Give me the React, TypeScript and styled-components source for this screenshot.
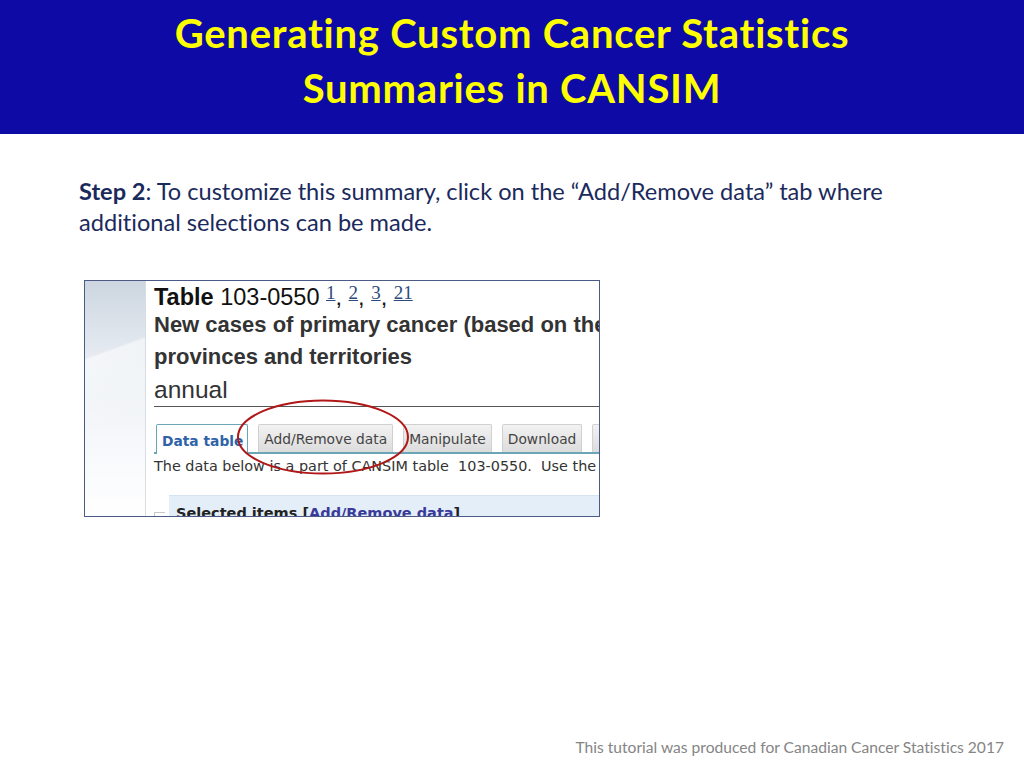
import styled, { createGlobalStyle } from 'styled-components';

const GlobalStyle = createGlobalStyle`
  body {
    margin: 0;
    background: #ffffff;
  }
`;

const Slide = styled.div`
  width: 1024px;
  height: 768px;
  display: flex;
  flex-direction: column;
  font-family: Lato, 'Open Sans', sans-serif;
  font-variant-ligatures: none;
  overflow: hidden;
`;

const Header = styled.header`
  height: 134px;
  background: #0e0aa5;
  display: flex;
  flex-direction: column;
  align-items: center;
  padding-top: 6px;
  box-sizing: border-box;
`;

const TitleLine = styled.h1`
  margin: 0;
  font-size: 40px;
  line-height: 55px;
  letter-spacing: 0.75px;
  font-weight: 700;
  color: #ffff00;
  text-align: center;
`;

const Body = styled.main`
  flex: 1;
  display: flex;
  flex-direction: column;
  padding: 42px 79px 0 79px;
`;

const StepText = styled.p`
  margin: 0;
  font-size: 23.6px;
  line-height: 31px;
  color: #1b2a5c;
  max-width: 830px;

  strong {
    font-weight: 700;
  }
`;

const ShotWrap = styled.div`
  position: relative;
  margin: 42px 0 0 5px;
  width: 516px;
  height: 237px;
`;

const Shot = styled.div`
  width: 100%;
  height: 100%;
  box-sizing: border-box;
  border: 1px solid #4b5b85;
  display: flex;
  overflow: hidden;
  background: #fff;
`;

const SideStrip = styled.div`
  width: 60px;
  flex-shrink: 0;
  border-right: 1px solid #d8dde3;
  background:
    linear-gradient(160deg, transparent 0%, transparent 30%, rgba(255, 255, 255, 0.55) 31%, transparent 60%),
    linear-gradient(180deg, #cdd6e0 0%, #dbe2ea 18%, #eaeff4 38%, #f5f7fa 65%, #ffffff 100%);
`;

const ShotContent = styled.div`
  flex: 1;
  padding-left: 8px;
  min-width: 0;
  overflow: hidden;
  white-space: nowrap;
`;

const TableTitle = styled.div`
  font-family: 'Liberation Sans', Arial, sans-serif;
  font-size: 23.5px;
  line-height: 24px;
  color: #111;

  b {
    font-weight: 700;
  }
`;

const Sup = styled.a`
  font-family: 'Liberation Serif', 'Times New Roman', serif;
  font-size: 19px;
  color: #2c4a7c;
  text-decoration: underline;
  vertical-align: 6px;
`;

const Subject = styled.div`
  font-family: 'Liberation Sans', Arial, sans-serif;
  font-size: 22px;
  font-weight: 700;
  line-height: 32px;
  color: #333;

  &:first-of-type {
    margin-top: 4px;
  }
`;

const Frequency = styled.div`
  font-family: 'Liberation Sans', Arial, sans-serif;
  font-size: 24.5px;
  line-height: 33px;
  color: #333;
  border-bottom: 1px solid #555;
`;

const TabRow = styled.div`
  display: flex;
  align-items: flex-start;
  gap: 10px;
  margin-top: 17px;
  padding-left: 2px;
  border-bottom: 2px solid #6aa6b8;
`;

const Tab = styled.div<{ $active?: boolean }>`
  font-family: 'DejaVu Sans', Verdana, sans-serif;
  font-size: 13.8px;
  display: flex;
  align-items: center;
  box-sizing: border-box;
  padding: ${(p) => (p.$active ? '3px 4px 0 5px' : '0 5px')};
  color: ${(p) => (p.$active ? '#2f63a8' : '#444')};
  font-weight: ${(p) => (p.$active ? 700 : 400)};
  background: ${(p) => (p.$active ? '#fff' : 'linear-gradient(#f2f2f2, #dcdcdc)')};
  border: 1px solid ${(p) => (p.$active ? '#6aa6b8' : '#d0d0d0')};
  border-bottom: none;
  height: ${(p) => (p.$active ? '30px' : '28px')};
  margin-bottom: ${(p) => (p.$active ? '-2px' : '0')};
  border-radius: 2px 2px 0 0;
`;

const Note = styled.div`
  font-family: 'DejaVu Sans', Verdana, sans-serif;
  font-size: 14.4px;
  line-height: 17px;
  color: #333;
  margin-top: 4px;
  white-space: pre;
`;

const SelectedRow = styled.div`
  display: flex;
  align-items: flex-start;
  margin-top: 20px;
`;

const Marker = styled.div`
  width: 10px;
  height: 12px;
  margin-top: 17px;
  border: 1px solid #c8c8c8;
  border-right: none;
  border-bottom: none;
  flex-shrink: 0;
`;

const SelectedBox = styled.div`
  flex: 1;
  margin-left: 4px;
  background: #e4eef9;
  border-top: 1px solid #d5e2f0;
  padding: 9px 0 0 7px;
  font-family: 'DejaVu Sans', Verdana, sans-serif;
  font-size: 14.5px;
  font-weight: 700;
  color: #222;

  a {
    color: #3a3a9a;
  }
`;

const Ellipse = styled.svg`
  position: absolute;
  left: 152px;
  top: 119px;
  overflow: visible;
`;

const Footer = styled.footer`
  text-align: right;
  padding: 0 20px 12px 0;
  font-size: 15.6px;
  color: #858585;
  margin-top: auto;
`;

export default function App() {
  return (
    <>
      <GlobalStyle />
      <Slide>
        <Header>
          <TitleLine>Generating Custom Cancer Statistics</TitleLine>
          <TitleLine>Summaries in CANSIM</TitleLine>
        </Header>
        <Body>
          <StepText>
            <strong>Step 2</strong>: To customize this summary, click on the “Add/Remove data” tab where
            additional selections can be made.
          </StepText>
          <ShotWrap>
            <Shot>
              <SideStrip />
              <ShotContent>
                <TableTitle>
                  <b>Table</b> 103-0550 <Sup>1</Sup>, <Sup>2</Sup>, <Sup>3</Sup>, <Sup>21</Sup>
                </TableTitle>
                <Subject>New cases of primary cancer (based on the</Subject>
                <Subject>provinces and territories</Subject>
                <Frequency>annual</Frequency>
                <TabRow>
                  <Tab $active>Data table</Tab>
                  <Tab>Add/Remove data</Tab>
                  <Tab>Manipulate</Tab>
                  <Tab>Download</Tab>
                  <Tab>Related</Tab>
                </TabRow>
                <Note>The data below is a part of CANSIM table  103-0550.  Use the</Note>
                <SelectedRow>
                  <Marker />
                  <SelectedBox>
                    Selected items [<a>Add/Remove data</a>]
                  </SelectedBox>
                </SelectedRow>
              </ShotContent>
            </Shot>
            <Ellipse width="175" height="76" viewBox="0 0 175 76">
              <ellipse cx="87" cy="38" rx="85" ry="36.5" fill="none" stroke="#b01818" strokeWidth="2" />
            </Ellipse>
          </ShotWrap>
        </Body>
        <Footer>This tutorial was produced for Canadian Cancer Statistics 2017</Footer>
      </Slide>
    </>
  );
}
